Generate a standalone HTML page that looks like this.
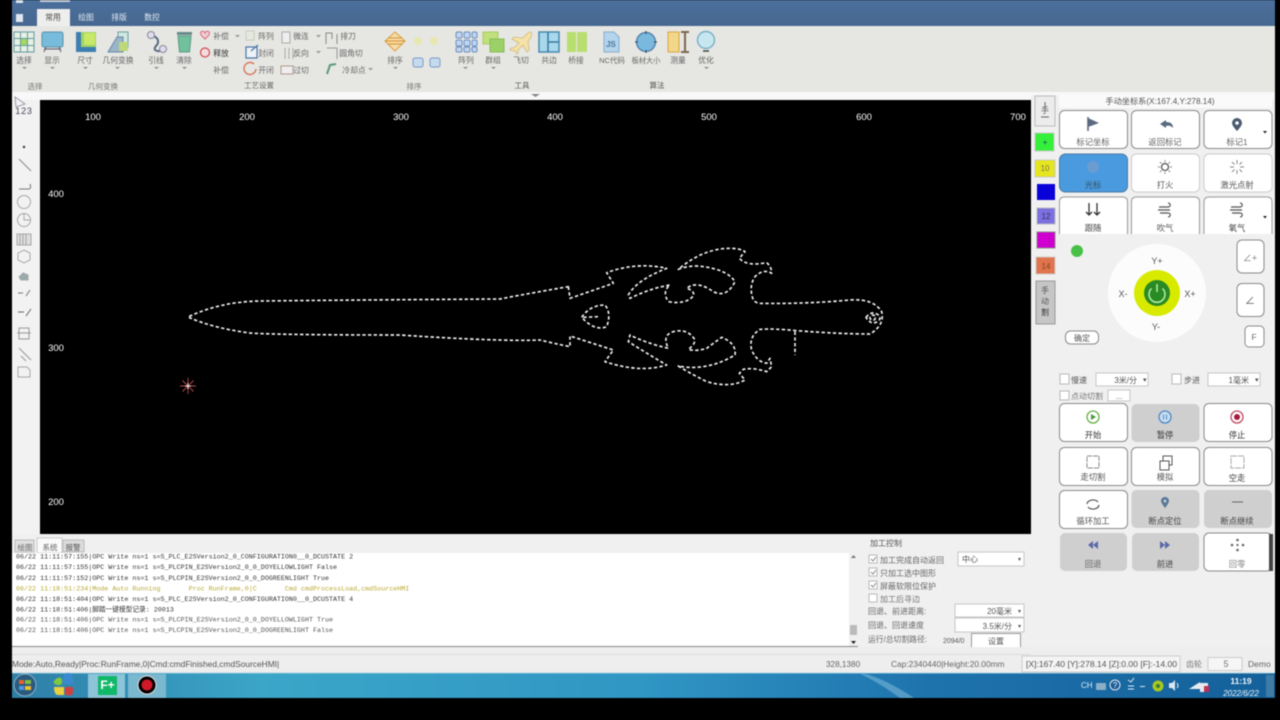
<!DOCTYPE html>
<html lang="zh"><head><meta charset="utf-8"><title>CypCut</title>
<style>
html,body{margin:0;padding:0;background:#000;width:1280px;height:720px;overflow:hidden}
svg{display:block;filter:blur(.6px)}
text{font-family:"Liberation Sans","Noto Sans CJK SC",sans-serif;font-size:8.3px;fill:#555}
.m{text-anchor:middle}
.b{fill:#fff;stroke:#8a8a8a;stroke-width:1}
.g{fill:#cfcfcf}
.l{font-family:"Liberation Mono","Noto Sans CJK SC",monospace;font-size:6.7px;fill:#333}
.w{fill:#fff;font-size:9.5px;text-anchor:middle}
.d{fill:#fff;stroke:#bbb;stroke-width:.8}
.c{fill:#fff;stroke:#aaa;stroke-width:.8}
.r{font-size:7.8px;fill:#666}
</style></head><body>
<svg width="1280" height="720" viewBox="0 0 1280 720" xmlns="http://www.w3.org/2000/svg">
<defs>
<linearGradient id="tb" x1="0" x2="1" y1="0" y2="0"><stop offset="0" stop-color="#2f7fa8"/><stop offset=".2" stop-color="#3ba6c8"/><stop offset=".5" stop-color="#3096c4"/><stop offset=".72" stop-color="#1f74ae"/><stop offset="1" stop-color="#14609a"/></linearGradient>
<linearGradient id="ti" x1="0" x2="0" y1="0" y2="1"><stop offset="0" stop-color="#4b6f9c"/><stop offset="1" stop-color="#466890"/></linearGradient>
</defs>
<rect width="1280" height="720" fill="#000"/>
<rect x="12" y="0" width="1263" height="698" fill="#f0f0f0"/>
<!-- title -->
<rect x="12" y="0" width="1263" height="26" fill="url(#ti)"/>
<rect x="16" y="14" width="7" height="8" fill="#dfe6ee"/>
<rect x="16" y="0" width="7" height="3" fill="#dfe6ee"/><rect x="40" y="0" width="30" height="2" fill="#c8d2de"/>
<path d="M37 26V9h33v17z" fill="#eeeeec"/>
<text x="53" y="20" class="m" style="fill:#444;font-size:7.8px">常用</text>
<text x="86" y="20" class="m" style="fill:#e4eaf2;font-size:7.8px">绘图</text>
<text x="119" y="20" class="m" style="fill:#e4eaf2;font-size:7.8px">排版</text>
<text x="152" y="20" class="m" style="fill:#e4eaf2;font-size:7.8px">数控</text>
<!-- ribbon -->
<rect x="12" y="26" width="1263" height="66" fill="#e6e6e3"/>
<rect x="12" y="92" width="1263" height="8" fill="#f8f8f8"/>
<path d="M531 94h9l-4.500 3z" fill="#888"/>
<!-- ribbon icons -->
<rect x="14" y="32" width="20" height="20" fill="#e8f0e4" stroke="#5f9aa0" stroke-width="1"/><rect x="20" y="38" width="8" height="8" fill="#a6d860"/><path d="M20.500 32v20M27.500 32v20M14 38.500h20M14 45.500h20" stroke="#5f9aa0" stroke-width="1"/>
<rect x="42" y="32" width="21" height="15" rx="2" fill="#78bcdc" stroke="#5a8ea8"/><path d="M46 47l-2 5M59 47l2 5M44 49h17" stroke="#556" stroke-width="1"/>
<rect x="76" y="32" width="20" height="20" fill="#a0d468"/><rect x="76" y="32" width="5" height="20" fill="#3d7fb0"/><rect x="76" y="47" width="20" height="5" fill="#3d7fb0"/><rect x="84" y="33" width="11" height="12" fill="#c8e868"/>
<rect x="118" y="32" width="10" height="15" fill="#cfe8e0" stroke="#6aa0a8"/><path d="M108 52l9-15h6v15z" fill="#9ab4c8" stroke="#6a8aa8"/><rect x="119" y="42" width="9" height="9" fill="#bcd878"/>
<path d="M150 35c10 2 9 8 6 11s-1 7 8 4" fill="none" stroke="#596a86" stroke-width="2"/><circle cx="151" cy="35" r="3.500" fill="#dde" stroke="#889"/><circle cx="163" cy="49" r="3.500" fill="#dde" stroke="#889"/>
<path d="M178 36h13l-1.500 16h-10z" fill="#72c09c" stroke="#5a9a88"/><rect x="177" y="32" width="15" height="3" fill="#6a8a88"/>
<path d="M205 39l-4-4c-2-4 3-5 4-2 1-3 6-2 4 2z" fill="#f0d0d4" stroke="#d86a7a"/>
<circle cx="205" cy="52.500" r="4.500" fill="#f4dcdc" stroke="#d04a50" stroke-width="1.200"/>
<rect x="246" y="31" width="8" height="9" fill="#e4e8de" stroke="#c8ccc0"/>
<path d="M246 47h11v11h-11zM251 51l7-6" fill="#eef2f6" stroke="#4a78a8" stroke-width="1.200"/>
<path d="M254 64a6 6 0 1 0 2 5" fill="none" stroke="#d8765a" stroke-width="1.400"/>
<rect x="282" y="32" width="8" height="11" fill="#eee" stroke="#aaa"/>
<path d="M285 48v11M289 48v11M293 48v11" stroke="#aaa"/>
<path d="M281 66h12v8h-12z" fill="#eee" stroke="#b09a8a"/>
<path d="M326 44v-11h6v6M337 34v10" fill="none" stroke="#888"/>
<path d="M327 48h10v11" fill="none" stroke="#999"/>
<path d="M327 74l3-9 6-1" fill="none" stroke="#5a9a78" stroke-width="2"/>
<text x="221" y="39" class="m r">补偿</text><text x="221" y="56" class="m" style="font-size:7.800px;fill:#333">释放</text><text x="221" y="73" class="m r">补偿</text>
<text x="266" y="39" class="m r">阵列</text><text x="266" y="56" class="m r">封闭</text><text x="266" y="73" class="m r">开闭</text>
<text x="301" y="39" class="m r">微连</text><text x="301" y="56" class="m r">反向</text><text x="301" y="73" class="m r">过切</text>
<text x="348" y="39" class="m r">排刀</text><text x="351" y="56" class="m r">圆角切</text><text x="354" y="73" class="m r">冷却点</text>
<path d="M235 35h5l-2.500 2.500zM316 35h5l-2.500 2.500zM316 51h5l-2.500 2.500zM368 68h5l-2.500 2.500z" fill="#999"/>
<path d="M395 32l10 9-10 10-10-10z" fill="#f6dca8" stroke="#d8a040"/><path d="M385 41h20M388 38h14M388 44h14" stroke="#d89030"/>
<circle cx="418" cy="41" r="4" fill="#e6e8b0"/><circle cx="434" cy="41" r="4" fill="#e6e8b0"/>
<rect x="413" y="58" width="10" height="9" rx="2" fill="#c6daee" stroke="#7a9cc4"/><rect x="430" y="58" width="10" height="9" rx="2" fill="#c6daee" stroke="#7a9cc4"/>
<g fill="#c0d4ee" stroke="#6c90c0"><rect x="456" y="32" width="6" height="6" rx="1.500"/><rect x="464" y="32" width="6" height="6" rx="1.500"/><rect x="472" y="32" width="5" height="6" rx="1.500"/><rect x="456" y="40" width="6" height="6" rx="1.500"/><rect x="464" y="40" width="6" height="6" rx="1.500"/><rect x="472" y="40" width="5" height="6" rx="1.500"/><rect x="456" y="47" width="6" height="5" rx="1.500"/><rect x="464" y="47" width="6" height="5" rx="1.500"/><rect x="472" y="47" width="5" height="5" rx="1.500"/></g>
<rect x="483" y="32" width="15" height="12" fill="#c0e07c" stroke="#a8cc68"/><rect x="490" y="39" width="14" height="13" fill="#9cd068" stroke="#88bc58"/>
<path d="M531 32c-3 0-5 3-8 6l-9-1-2 2 7 4-5 5-3 0-1 2 5 1 2 3 1-1v-3l5-5 4 7 2-2-1-9c3-3 5-6 3-9z" fill="#f4e2a8" stroke="#d0b878" stroke-width=".8"/>
<rect x="539" y="32" width="20" height="20" fill="#a8d8ec" stroke="#4a8ab0" stroke-width="1.500"/><path d="M548 32v20M548 42h11" stroke="#3a78a0" stroke-width="1.500"/>
<rect x="567" y="32" width="9" height="20" fill="#b8de70"/><rect x="577" y="32" width="10" height="20" fill="#b8de70"/>
<path d="M604 32h10l5 5v15h-15z" fill="#b4d4ec" stroke="#86aecc"/><text x="611" y="47" class="m" style="font-size:8px;fill:#4a7a9e;font-weight:bold">JS</text>
<circle cx="646" cy="42" r="9.500" fill="#7ab8de" stroke="#4a7aa8" stroke-width="1.200"/><path d="M646 31v3M646 50v3M635 42h3M654 42h3" stroke="#345" stroke-width="1"/>
<rect x="668" y="32" width="11" height="20" fill="#f2d68a" stroke="#d8a840"/><path d="M685 32v20M681 32h8M681 52h8" stroke="#7a6a50" stroke-width="2"/>
<circle cx="706" cy="40" r="8.500" fill="#c8e6f0" stroke="#78b0c8" stroke-width="1.400"/><path d="M703 51h6" stroke="#444" stroke-width="1.500"/>
<text x="24" y="63" class="m r">选择</text><text x="52" y="63" class="m r">显示</text><text x="85" y="63" class="m r">尺寸</text><text x="118" y="63" class="m r">几何变换</text><text x="156" y="63" class="m r">引线</text><text x="184" y="63" class="m r">清除</text>
<text x="395" y="63" class="m r">排序</text><text x="466" y="63" class="m r">阵列</text><text x="493" y="63" class="m r">群组</text><text x="521" y="63" class="m r">飞切</text><text x="549" y="63" class="m r">共边</text><text x="576" y="63" class="m r">桥接</text>
<text x="612" y="63" class="m" style="font-size:7.500px;fill:#666">NC代码</text><text x="646" y="63" class="m" style="font-size:7.200px;fill:#666">板材大小</text><text x="678" y="63" class="m r">测量</text><text x="706" y="63" class="m r">优化</text>
<path d="M22 67h5l-2.500 2zM50 67h5l-2.500 2zM83 67h5l-2.500 2zM115 67h5l-2.500 2zM154 67h5l-2.500 2zM182 67h5l-2.500 2zM393 67h5l-2.500 2zM463 67h5l-2.500 2zM491 67h5l-2.500 2zM704 67h5l-2.500 2z" fill="#888"/>
<text x="35" y="89" class="m" style="font-size:7.500px;fill:#777">选择</text><text x="103" y="89" class="m" style="font-size:7.500px;fill:#777">几何变换</text><text x="259" y="88" class="m" style="font-size:7.500px;fill:#666">工艺设置</text><text x="414" y="89" class="m" style="font-size:7.500px;fill:#777">排序</text><text x="522" y="88" class="m" style="font-size:7.500px;fill:#555">工具</text><text x="657" y="88" class="m" style="font-size:7.500px;fill:#555">算法</text>
<!-- left toolbar -->
<rect x="12" y="100" width="28" height="434" fill="#f2f2f2"/>
<path d="M15 97l10 7-9 3z" fill="#f4f4f4" stroke="#99a"/>
<text x="24" y="114" class="m" style="font-size:9px;fill:#445;letter-spacing:.8px">123</text>
<g fill="none" stroke="#a8a8a8" stroke-width="1">
<path d="M19 159l12 12" stroke="#888"/><path d="M19 189h9c3 0 3-2 2-5" stroke="#777"/>
<circle cx="24" cy="202" r="6.500"/><circle cx="24" cy="220" r="6.500"/><path d="M24 214v6h6" />
<rect x="17" y="234" width="14" height="11" fill="#ddd"/><path d="M20 234v11M23 234v11M26 234v11"/>
<path d="M24 250l6 3v7l-6 3-6-3v-7z"/>
<path d="M19 277l4-4 5 2 0 5-7 0z" fill="#9aa"/>
<path d="M18 293h5M26 296l4-6" stroke="#777"/><path d="M18 312h6M26 316l5-7" stroke="#666"/>
<path d="M19 328h10v11h-10zM17 333h14" stroke="#999"/><path d="M19 348l12 12M21 356l5 5" stroke="#999"/>
<path d="M18 367h9l3 3v7h-12z"/></g>
<circle cx="24" cy="147" r="1.200" fill="#333"/>
<!-- canvas -->
<rect x="40" y="100" width="991" height="434" fill="#000"/>
<text x="93" y="120" class="w">100</text><text x="247" y="120" class="w">200</text><text x="401" y="120" class="w">300</text><text x="555" y="120" class="w">400</text><text x="709" y="120" class="w">500</text><text x="864" y="120" class="w">600</text><text x="1018" y="120" class="w">700</text>
<text x="56" y="197" class="w">400</text><text x="56" y="351" class="w">300</text><text x="56" y="505" class="w">200</text>
<!-- marker -->
<path d="M180 386h16M188 378v16M182.500 380.500l11 11M193.500 380.500l-11 11" stroke="#b84a4a" stroke-width=".9"/><path d="M185 386h6M188 383v6" stroke="#eee" stroke-width="1"/>
<!-- sword -->
<g transform="translate(540 230) scale(.33333)" fill="none" stroke="#f0f0f0" stroke-width="5" stroke-dasharray="10 7" stroke-linejoin="round" stroke-linecap="butt">
<path d="M85 170L90 205L220 160L200 128Q290 95 380 115Q290 150 265 195L270 205Q330 175 390 165Q365 185 385 215Q440 225 462 195Q460 180 440 175Q470 150 520 185Q560 205 585 155Q560 115 470 108Q440 108 415 118Q490 55 570 55Q600 55 615 65L598 85Q620 110 680 98Q695 110 695 130Q670 115 645 140Q625 170 640 210Q650 222 670 220Q800 222 930 210Q1000 205 1025 245Q1035 285 990 312Q900 312 770 302Q700 295 660 298Q625 320 635 360Q650 395 680 400L690 385L695 410L680 425Q640 412 610 418L598 430L615 450Q570 475 500 455Q450 430 415 408Q500 425 585 375Q590 340 545 322Q520 340 500 355Q470 365 445 358Q470 340 462 325Q440 295 400 305Q365 315 385 355Q320 340 270 315L265 335Q320 370 380 405Q300 430 195 395L220 360L90 318L90 350Q40 340 -0 330Q-120 335 -420 315Q-780 315 -870 309Q-980 295 -1056 261Q-960 215 -840 213Q-570 210 -120 207Q-60 195 85 170z"/>
<path d="M125 262Q150 225 195 225Q215 250 200 290Q165 305 125 262zM130 262L175 260"/>
<path d="M978 262Q995 240 1015 255Q1030 270 1000 280Q985 275 978 262z"/><circle cx="998" cy="263" r="8"/>
<path d="M765 305V375"/>
</g>
<!-- side strip -->
<rect x="1031" y="95" width="28" height="439" fill="#f0f0f0"/>
<rect x="1035" y="96" width="20" height="30" fill="#ececec" stroke="#bbb"/><text x="1045" y="113" class="m" style="font-size:8px">手</text><path d="M1045 102v6M1041 117h8" stroke="#666"/>
<rect x="1035" y="133" width="19" height="18" fill="#35f03a" stroke="#c8c8c8"/><text x="1045" y="145" class="m" style="fill:#146">+</text>
<rect x="1035" y="160" width="20" height="17" fill="#e6e61e" stroke="#c8c8c8"/><text x="1045" y="171" class="m" style="font-size:8px;fill:#775">10</text>
<rect x="1037" y="184" width="18" height="16" fill="#0a00d8"/>
<rect x="1037" y="208" width="18" height="16" fill="#7a70e0" stroke="#bbb"/><text x="1046" y="219" class="m" style="font-size:8px;fill:#336">12</text>
<rect x="1037" y="232" width="18" height="16" fill="#d000d0" stroke="#888"/>
<rect x="1036" y="257" width="19" height="17" fill="#e0744c" stroke="#ccc"/><text x="1046" y="269" class="m" style="font-size:8px;fill:#842">14</text>
<rect x="1036" y="281" width="19" height="43" fill="#c6c6c6" stroke="#999"/>
<text x="1045" y="293" class="m" style="font-size:8px">手</text><text x="1045" y="304" class="m" style="font-size:8px">动</text><text x="1045" y="315" class="m" style="font-size:8px;fill:#333">割</text>
<!-- right top label -->
<rect x="1059" y="95" width="213" height="13" fill="#fafafa"/>
<text x="1160" y="104" class="m" style="font-size:8.200px;fill:#555">手动坐标系(X:167.4,Y:278.14)</text>
<!-- buttons top -->
<rect x="1059.500" y="110.500" width="68" height="38" rx="5" class="b"/><rect x="1131.500" y="110.500" width="68" height="38" rx="5" class="b"/><rect x="1204" y="110.500" width="68" height="38" rx="5" class="b"/>
<rect x="1059.500" y="154" width="68" height="38" rx="6" fill="#4a9ae0" stroke="#4a78a0"/><rect x="1131.500" y="154" width="68" height="38" rx="5" fill="#fff" stroke="#ccc"/><rect x="1204" y="154" width="68" height="38" rx="5" fill="#fff" stroke="#ccc"/>
<path d="M1059.500 234v-32q0-5 5-5h58q5 0 5 5v32M1131.500 234v-32q0-5 5-5h58q5 0 5 5v32M1204 234v-32q0-5 5-5h58q5 0 5 5v32" fill="#fff" stroke="#9a9a9a"/>
<path d="M1088 117v14" stroke="#5a6a80" stroke-width="1.600"/><path d="M1088 118l11 5-11 4z" fill="#5a6a80"/>
<path d="M1160 124l6-4v2c5 0 7 2 7 6-2-2-4-3-7-2v2z" fill="#5a6a80"/>
<path d="M1237 118a5 5 0 0 1 5 5c0 3-5 8-5 8s-5-5-5-8a5 5 0 0 1 5-5z" fill="#4a5a70"/><circle cx="1237" cy="123" r="1.800" fill="#fff"/>
<path d="M1263 131h4l-2 2.500z" fill="#222"/>
<text x="1093" y="145" class="m" style="fill:#666">标记坐标</text><text x="1165" y="145" class="m" style="fill:#666">返回标记</text><text x="1237" y="145" class="m" style="fill:#666">标记1</text>
<circle cx="1093" cy="167" r="6" fill="#6a9cd0"/><text x="1093" y="188" class="m" style="fill:#356">光标</text>
<circle cx="1165" cy="167" r="3.500" fill="none" stroke="#555" stroke-width="1.300"/><path d="M1165 160v2M1165 172v2M1158 167h2M1170 167h2M1160 162l1.500 1.500M1170 162l-1.500 1.500M1160 172l1.500-1.500M1170 172l-1.500-1.500" stroke="#888"/><text x="1165" y="188" class="m" style="fill:#555">打火</text>
<path d="M1237 160v4M1237 170v4M1230 167h4M1240 167h4M1232 162l2.500 2.500M1242 162l-2.500 2.500M1232 172l2.500-2.500M1242 172l-2.500-2.500" stroke="#888"/><text x="1237" y="188" class="m" style="fill:#555">激光点射</text>
<path d="M1089 203v12M1086 212l3 3 3-3M1097 203v12M1094 212l3 3 3-3" fill="none" stroke="#333" stroke-width="1.300"/><text x="1093" y="231" class="m" style="fill:#444">跟随</text>
<path d="M1159 207h9c3 0 3-4 0-4M1158 210h12M1160 213h8c3 0 3 4 0 4" fill="none" stroke="#555" stroke-width="1.200"/><text x="1165" y="231" class="m" style="fill:#555">吹气</text>
<path d="M1231 207h9c3 0 3-4 0-4M1230 210h12M1232 213h8c3 0 3 4 0 4" fill="none" stroke="#555" stroke-width="1.200"/><text x="1237" y="231" class="m" style="fill:#444">氧气</text>
<path d="M1263 216h4l-2 2.500z" fill="#222"/>
<!-- joystick -->
<circle cx="1077" cy="251" r="6" fill="#48c048"/>
<circle cx="1157" cy="293" r="49" fill="#fcfcfc"/>
<circle cx="1157" cy="293" r="23" fill="#d8ea00"/>
<circle cx="1157" cy="293" r="13" fill="#2a8a24"/>
<path d="M1151.500 288.500a8 8 0 1 0 11 0" fill="none" stroke="#b6f0a8" stroke-width="1.500"/><path d="M1157 284v8" stroke="#b6f0a8" stroke-width="1.500"/>
<text x="1157" y="264" class="m" style="font-size:9px">Y+</text><text x="1123" y="297" class="m" style="font-size:9px">X-</text><text x="1190" y="297" class="m" style="font-size:9px">X+</text><text x="1156" y="330" class="m" style="font-size:9px">Y-</text>
<rect x="1237" y="240" width="27" height="33" rx="5" class="b" stroke="#aaa"/><text x="1250" y="261" class="m" style="font-size:9px;fill:#777">∠+</text>
<rect x="1237" y="283.500" width="27" height="33" rx="5" class="b"/><text x="1250" y="304" class="m" style="font-size:10px;fill:#555">∠</text>
<rect x="1245" y="326" width="19" height="21" rx="4" class="b"/><text x="1254" y="340" class="m" style="fill:#666">F</text>
<rect x="1065.500" y="331" width="33" height="13" rx="5" class="b"/><text x="1082" y="341" class="m" style="font-size:8px">确定</text>
<!-- options -->
<rect x="1060" y="374" width="9" height="10" class="c"/><text x="1071" y="383" style="font-size:8px">慢速</text>
<rect x="1096" y="373" width="52" height="13" class="d"/><text x="1137" y="383" style="font-size:8px;text-anchor:end">3米/分</text><text x="1143" y="382" style="font-size:7px">▾</text>
<rect x="1172" y="374" width="9" height="10" class="c"/><text x="1184" y="383" style="font-size:8px">步进</text>
<rect x="1208" y="373" width="52" height="13" class="d"/><text x="1249" y="383" style="font-size:8px;text-anchor:end">1毫米</text><text x="1255" y="382" style="font-size:7px">▾</text>
<rect x="1060" y="391" width="9" height="9" class="c"/><text x="1071" y="399" style="font-size:8px;fill:#777">点动切割</text>
<rect x="1108" y="390" width="22" height="11" class="d"/><text x="1119" y="399" class="m" style="font-size:8px">...</text>
<!-- buttons bottom -->
<rect x="1059.500" y="403.500" width="68" height="38" rx="5" class="b"/><rect x="1131.500" y="404" width="68" height="38" rx="5" class="g"/><rect x="1204" y="403.500" width="68" height="38" rx="5" class="b"/>
<rect x="1059.500" y="447.500" width="68" height="38" rx="5" class="b"/><rect x="1131.500" y="447.500" width="68" height="38" rx="5" class="b"/><rect x="1204" y="447.500" width="68" height="38" rx="5" class="b"/>
<rect x="1059.500" y="490.500" width="68" height="38" rx="5" class="b"/><rect x="1131.500" y="490" width="68" height="38" rx="5" class="g"/><rect x="1204" y="490" width="68" height="38" rx="5" class="g"/>
<rect x="1060" y="533" width="67" height="38" rx="5" class="g"/><rect x="1132" y="533" width="67" height="38" rx="5" class="g"/><rect x="1204" y="533" width="68" height="38" rx="5" class="b"/>
<rect x="1269" y="534" width="4" height="37" fill="#444"/>
<circle cx="1093" cy="417" r="6" fill="#fff" stroke="#6ab04a" stroke-width="1.300"/><path d="M1091 414l5 3-5 3z" fill="#4a9a3a"/>
<circle cx="1165" cy="417" r="6" fill="#cde" stroke="#4a8ac8" stroke-width="1.300"/><path d="M1163.500 414.500v5M1166.500 414.500v5" stroke="#4a8ac8"/>
<circle cx="1237" cy="417" r="6" fill="#fff" stroke="#c04a60" stroke-width="1.300"/><circle cx="1237" cy="417" r="3" fill="#a81840"/>
<text x="1093" y="438" class="m" style="fill:#333">开始</text><text x="1165" y="438" class="m" style="fill:#333">暂停</text><text x="1237" y="438" class="m" style="fill:#333">停止</text>
<rect x="1087" y="456" width="12" height="12" fill="none" stroke="#888" stroke-dasharray="5 1"/><path d="M1160 461h9v9h-9zM1163 461v-5h9v9h-3" fill="none" stroke="#555" stroke-width="1"/><rect x="1231" y="456" width="13" height="12" fill="none" stroke="#aaa" stroke-dasharray="6 1"/>
<text x="1093" y="480" class="m">走切割</text><text x="1165" y="480" class="m">模拟</text><text x="1237" y="481" class="m" style="fill:#444">空走</text>
<path d="M1087 504a6 4.500 0 0 1 11-2M1099 505a6 4.500 0 0 1-11 2" fill="none" stroke="#555" stroke-width="1.200"/>
<text x="1093" y="524" class="m">循环加工</text>
<path d="M1165 497a4 4 0 0 1 4 4c0 2-4 7-4 7s-4-5-4-7a4 4 0 0 1 4-4z" fill="#5a7a9a"/><circle cx="1165" cy="501" r="1.300" fill="#ddd"/>
<text x="1165" y="524" class="m" style="fill:#444">断点定位</text>
<path d="M1232 502h11" stroke="#666"/><text x="1237" y="524" class="m" style="fill:#444">断点继续</text>
<path d="M1088 545l5-4v8zM1093 545l5-4v8z" fill="#5a6aa8"/><path d="M1160 541l5 4-5 4zM1165 541l5 4-5 4z" fill="#5a6aa8"/>
<g fill="#666"><circle cx="1237.500" cy="540" r="1.300"/><circle cx="1237.500" cy="550" r="1.300"/><circle cx="1232" cy="545" r="1.300"/><circle cx="1243" cy="545" r="1.300"/><circle cx="1237.500" cy="545" r="1.100"/></g>
<text x="1093" y="567" class="m" style="fill:#666">回退</text><text x="1165" y="567" class="m" style="fill:#444">前进</text><text x="1237" y="567" class="m" style="fill:#888">回零</text>
<!-- bottom left -->
<rect x="12" y="534" width="1019" height="19" fill="#f0f0f0"/>
<rect x="15" y="540" width="19" height="12" fill="#e0e0e0" stroke="#bbb"/><text x="25" y="550" class="m" style="font-size:7.500px;fill:#666">绘图</text>
<rect x="37" y="538" width="25" height="15" fill="#fafafa" stroke="#ccc"/><text x="50" y="550" class="m" style="font-size:7.500px;fill:#666">系统</text>
<rect x="63" y="540" width="21" height="12" fill="#dcdcdc" stroke="#bbb"/><text x="73" y="550" class="m" style="font-size:7.500px;fill:#555">报警</text>
<rect x="12" y="553" width="846" height="93" fill="#fff"/>
<rect x="849" y="553" width="9" height="93" fill="#f0f0f0"/><rect x="850" y="625" width="7" height="10" fill="#bbb"/><path d="M851 641h5l-2.500 3z" fill="#222"/><path d="M851 558h5l-2.500-3z" fill="#777"/>
<path d="M12 646.500h846" stroke="#888"/>
<text class="l" x="16" y="558.500">06/22 11:11:57:155|OPC Write ns=1 s=S_PLC_E2SVersion2_0_CONFIGURATION0__0_DCUSTATE 2</text>
<text class="l" x="16" y="569">06/22 11:11:57:155|OPC Write ns=1 s=S_PLCPIN_E2SVersion2_0_0_DOYELLOWLIGHT False</text>
<text class="l" x="16" y="580">06/22 11:11:57:152|OPC Write ns=1 s=S_PLCPIN_E2SVersion2_0_0_DOGREENLIGHT True</text>
<text class="l" x="16" y="590.500" style="fill:#b8a830">06/22 11:18:51:234|Mode Auto Running&#160;&#160;&#160;&#160;&#160;&#160;&#160;Proc RunFrame,0|C&#160;&#160;&#160;&#160;&#160;&#160;&#160;Cmd cmdProcessLoad,cmdSourceHMI</text>
<text class="l" x="16" y="601">06/22 11:18:51:404|OPC Write ns=1 s=S_PLC_E2SVersion2_0_CONFIGURATION0__0_DCUSTATE 4</text>
<text class="l" x="16" y="611.500">06/22 11:18:51:406|脚踏一键模型记录: 20013</text>
<text class="l" x="16" y="621.500" style="fill:#555">06/22 11:18:51:406|OPC Write ns=1 s=S_PLCPIN_E2SVersion2_0_0_DOYELLOWLIGHT True</text>
<text class="l" x="16" y="632" style="fill:#555">06/22 11:18:51:406|OPC Write ns=1 s=S_PLCPIN_E2SVersion2_0_0_DOGREENLIGHT False</text>
<!-- control panel -->
<rect x="858" y="534" width="173" height="121" fill="#f0f0f0"/>
<text x="870" y="546" style="font-size:8px">加工控制</text>
<rect x="869" y="555" width="8" height="8" class="c"/><path d="M871 559l2 2 3-4" fill="none" stroke="#888"/><text x="880" y="563" style="font-size:8px;fill:#666">加工完成自动返回</text>
<rect x="869" y="568" width="8" height="8" class="c"/><path d="M871 572l2 2 3-4" fill="none" stroke="#888"/><text x="880" y="576" style="font-size:8px;fill:#666">只加工选中图形</text>
<rect x="869" y="581" width="8" height="8" class="c"/><path d="M871 585l2 2 3-4" fill="none" stroke="#888"/><text x="880" y="589" style="font-size:8px;fill:#666">屏蔽软限位保护</text>
<rect x="869" y="594" width="8" height="8" class="c"/><text x="880" y="602" style="font-size:8px;fill:#777">加工后寻边</text>
<text x="868" y="614" style="font-size:8px;fill:#666">回退、前进距离:</text><text x="868" y="628" style="font-size:8px;fill:#666">回退、回退速度</text><text x="868" y="642" style="font-size:7.800px;fill:#666">运行/总切割路径:</text>
<rect x="958" y="552" width="66" height="14" class="d"/><text x="962" y="562" style="font-size:8px">中心</text><text x="1018" y="561" style="font-size:6px">▾</text>
<rect x="955" y="604" width="69" height="13" class="d"/><text x="1012" y="614" style="font-size:8px;text-anchor:end">20毫米</text><text x="1018" y="613" style="font-size:6px">▾</text>
<rect x="955" y="618" width="69" height="14" class="d"/><text x="1012" y="629" style="font-size:8px;text-anchor:end">3.5米/分</text><text x="1018" y="628" style="font-size:6px">▾</text>
<text x="943" y="643" style="font-size:7px">2094/0</text>
<rect x="971.500" y="633.500" width="49" height="14" fill="#fff" stroke="#999"/><text x="996" y="644" class="m" style="font-size:8px">设置</text>
<!-- status -->
<rect x="12" y="647" width="1263" height="26" fill="#eeeeee"/>
<path d="M12 654.500h1019" stroke="#ddd"/>
<text x="12" y="667" style="font-size:8.400px;fill:#555">Mode:Auto,Ready|Proc:RunFrame,0|Cmd:cmdFinished,cmdSourceHMI|</text>
<text x="826" y="667" style="font-size:8.200px;fill:#666">328,1380</text>
<text x="891" y="667" style="font-size:8.350px;fill:#666">Cap:2340440|Height:20.00mm</text>
<rect x="1022" y="656" width="158" height="16" fill="#f4f4f4" stroke="#ccc"/>
<text x="1026" y="667" textLength="151" lengthAdjust="spacingAndGlyphs" style="font-size:8.400px;fill:#555">[X]:167.40 [Y]:278.14 [Z]:0.00 [F]:-14.00</text>
<text x="1186" y="667" style="font-size:8px;fill:#777">齿轮</text>
<rect x="1208" y="657.500" width="34" height="13" fill="#f6f6f6" stroke="#ccc"/><text x="1226" y="667" class="m" style="font-size:9px;fill:#777">5</text>
<text x="1248" y="667" style="font-size:8.500px;fill:#666">Demo</text>
<!-- taskbar -->
<rect x="12" y="673" width="1263" height="25" fill="url(#tb)"/>
<path d="M12 673h1263" stroke="#a6d0e0" stroke-width="1"/>
<path d="M866 674c14 4 32 13 48 24h-14c-14-10-26-18-40-24z" fill="#70b0d4" opacity=".65"/>
<circle cx="25" cy="685" r="11" fill="#2a5a80" stroke="#8ab0c0"/><path d="M19 680h5v4h-5z" fill="#e86030"/><path d="M25 680h6v4h-6z" fill="#80c040"/><path d="M19 686h5v4h-5z" fill="#4a9ae0"/><path d="M25 686h6v4h-6z" fill="#f0c030"/>
<path d="M54 681c4-5 8-4 8 0s-1 4-4 4-5-2-4-4z" fill="#80c840"/><path d="M63 678a5 5 0 0 1 10 0v6h-10z" fill="#3a8ad0"/><path d="M54 687h10v8h-6c-3 0-4-4-4-8z" fill="#e8d040"/><path d="M65 687h8v6c0 2-3 3-8 2z" fill="#d04040"/>
<rect x="88" y="674" width="37" height="24" fill="#8cc4d8"/>
<rect x="98" y="676" width="19" height="19" fill="#10b868"/><text x="107.500" y="689" class="m" style="font-size:12px;font-weight:bold;fill:#fff">F+</text>
<rect x="128" y="674" width="38" height="24" fill="#7ab8d0"/>
<circle cx="147" cy="685" r="9" fill="#000" stroke="#ddd" stroke-width="1"/><circle cx="147" cy="685" r="5.500" fill="#d01828"/>
<text x="1081" y="688" style="font-size:8px;fill:#e0ecf4">CH</text>
<rect x="1096" y="683" width="10" height="7" rx="1" fill="#8ab0c8"/>
<circle cx="1115" cy="685" r="5" fill="#1a5a98" stroke="#dfe8f0"/><text x="1115" y="688" class="m" style="font-size:8px;fill:#fff">?</text>
<path d="M1128 680l3 2 3-4M1128 686h6M1128 689h6" fill="none" stroke="#e0ecf4" stroke-width="1"/>
<path d="M1140 686h5v1h-5z" fill="#dfe8f0"/>
<circle cx="1158" cy="686" r="5.500" fill="#a8c820"/><circle cx="1158" cy="686" r="2" fill="#3a7a30"/>
<path d="M1169 683h3l3-3v11l-3-3h-3z" fill="#dfe8f0"/><path d="M1177 683q2 3 0 5" stroke="#dfe8f0" fill="none"/>
<path d="M1189 689l11-7v7z" fill="#e4ecf2"/>
<rect x="1200" y="683" width="8" height="9" fill="#e8e8f0"/><rect x="1204" y="686" width="5" height="6" fill="#c03058"/>
<text x="1241" y="684" class="m" style="font-size:8.500px;font-weight:bold;fill:#f0f6fa">11:19</text>
<text x="1241" y="696" class="m" style="font-size:8px;font-style:italic;fill:#e8f0f6">2022/6/22</text>
<rect x="1266" y="675" width="8" height="22" fill="#5a90b0" opacity=".6"/>
</svg>
</body></html>
